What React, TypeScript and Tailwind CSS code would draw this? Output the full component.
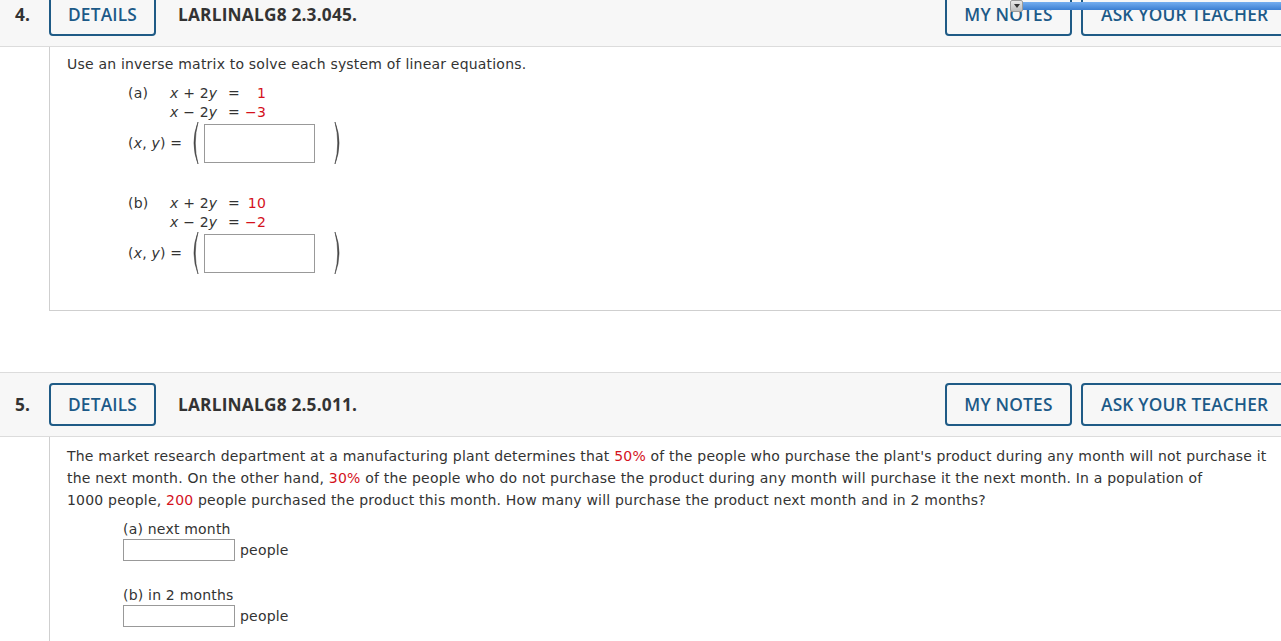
import React from "react";

const RED = "text-[#d4121c]";

function Paren({ close = false }: { close?: boolean }) {
  return (
    <svg width="10" height="44" viewBox="0 0 10 44" className="block">
      {close ? (
        <path d="M2 1 Q10 22 2 43 Q7.5 22 2 1 Z" fill="#444" stroke="#444" strokeWidth="0.6" />
      ) : (
        <path d="M8 1 Q0 22 8 43 Q2.5 22 8 1 Z" fill="#444" stroke="#444" strokeWidth="0.6" />
      )}
    </svg>
  );
}

function Header({ num, code }: { num: string; code: string }) {
  return (
    <div className="h-[65px] w-[1290px] bg-[#f7f7f7] border-y border-[#dcdcdc] flex items-center font-['Open_Sans',sans-serif] text-[17.3px]">
      <div className="w-[49px] pl-[15px] font-bold text-[#333]">{num}</div>
      <div className="h-[43px] w-[107px] border-2 border-[#1f5b86] rounded-[4px] flex items-center justify-center font-semibold text-[#1c5a88]">
        DETAILS
      </div>
      <div className="ml-[22px] font-bold text-[#333]">{code}</div>
      <div className="flex-1" />
      <div className="h-[43px] w-[127px] border-2 border-[#1f5b86] rounded-[4px] flex items-center justify-center font-semibold text-[#1c5a88]">
        MY NOTES
      </div>
      <div className="ml-[9px] h-[43px] w-[209px] border-2 border-[#1f5b86] rounded-[4px] flex items-center pl-[18px] font-semibold text-[#1c5a88]">
        ASK YOUR TEACHER
      </div>
    </div>
  );
}

function Eq({ label, r1, r2 }: { label: string; r1: string; r2: string }) {
  return (
    <div className="flex">
      <div className="w-[42px] leading-[19px]">{label}</div>
      <div className="flex flex-col leading-[19px]">
        <div className="flex">
          <span className="w-[58px]">
            <i>x</i> + 2<i>y</i>
          </span>
          <span className="w-[17px]">=</span>
          <span className={`w-[21px] text-right ${RED}`}>{r1}</span>
        </div>
        <div className="flex">
          <span className="w-[58px]">
            <i>x</i> − 2<i>y</i>
          </span>
          <span className="w-[17px]">=</span>
          <span className={`w-[21px] text-right ${RED}`}>{r2}</span>
        </div>
      </div>
    </div>
  );
}

function Answer() {
  return (
    <div className="flex items-center">
      <div className="w-[62px]">
        (<i>x</i>, <i>y</i>) =
      </div>
      <Paren />
      <div className="ml-[4px] w-[111px] h-[39px] border border-[#999] bg-white" />
      <div className="ml-[18px]">
        <Paren close />
      </div>
    </div>
  );
}

export default function App() {
  return (
    <div className="relative w-[1281px] h-[641px] overflow-hidden bg-white font-['DejaVu_Sans',Verdana,sans-serif] text-[14px] tracking-[0.2px] text-[#333]">
      <div className="-mt-[18px]">
        {/* Question 4 */}
        <Header num="4." code="LARLINALG8 2.3.045." />
        <div className="ml-[49px] h-[264px] border-l border-b border-[#cfcfcf] pl-[17px] pt-[9px]">
          <div className="leading-[16px]">Use an inverse matrix to solve each system of linear equations.</div>
          <div className="ml-[61px] mt-[12px]">
            <Eq label="(a)" r1="1" r2="−3" />
            <div className="-mt-[1px]">
              <Answer />
            </div>
            <div className="mt-[29px]">
              <Eq label="(b)" r1="10" r2="−2" />
            </div>
            <div className="-mt-[1px]">
              <Answer />
            </div>
          </div>
        </div>

        <div className="h-[61px]" />

        {/* Question 5 */}
        <Header num="5." code="LARLINALG8 2.5.011." />
        <div className="ml-[49px] h-[220px] border-l border-[#cfcfcf] pl-[17px] pt-[8px]">
          <div className="leading-[22px] whitespace-nowrap">
            The market research department at a manufacturing plant determines that <span className={RED}>50%</span> of the
            people who purchase the plant's product during any month will not purchase it
            <br />
            the next month. On the other hand, <span className={RED}>30%</span> of the people who do not purchase the
            product during any month will purchase it the next month. In a population of
            <br />
            1000 people, <span className={RED}>200</span> people purchased the product this month. How many will purchase the
            product next month and in 2 months?
          </div>
          <div className="ml-[56px] mt-[8px]">
            <div className="leading-[20px]">(a) next month</div>
            <div className="flex items-center">
              <div className="w-[112px] h-[22px] border border-[#999] bg-white" />
              <span className="ml-[5px]">people</span>
            </div>
            <div className="mt-[24px] leading-[20px]">(b) in 2 months</div>
            <div className="flex items-center">
              <div className="w-[112px] h-[22px] border border-[#999] bg-white" />
              <span className="ml-[5px]">people</span>
            </div>
          </div>
        </div>
      </div>

      {/* overlay bar at top right */}
      <div className="absolute left-[1010px] top-0 flex items-start">
        <div className="w-[13px] h-[12px] bg-gradient-to-b from-[#e8e8e8] to-[#bdbdbd] border border-[#9a9a9a] rounded-[2px] flex items-center justify-center">
          <svg width="6" height="4" viewBox="0 0 6 4">
            <path d="M0 0 L6 0 L3 4 Z" fill="#333" />
          </svg>
        </div>
        <div className="mt-[2px] w-[260px] h-[8px] bg-gradient-to-b from-[#74aef0] to-[#3c7fd2]" />
      </div>
    </div>
  );
}
